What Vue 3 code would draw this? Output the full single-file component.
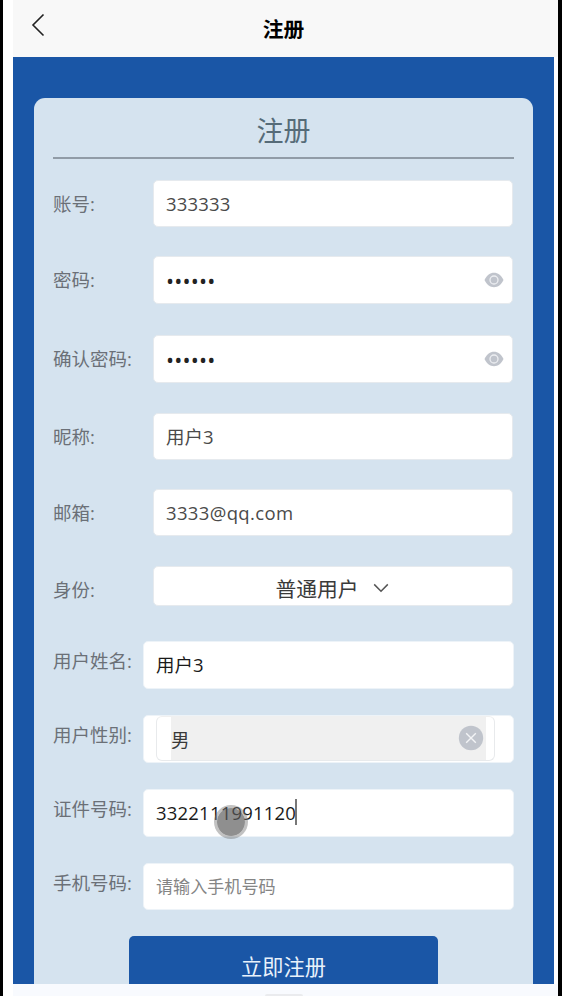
<script setup>
import { reactive } from 'vue';

const form = reactive({
    account: '333333',
    password: '333333',
    password2: '333333',
    nickname: '用户3',
    email: '3333@qq.com',
    role: '普通用户',
    realName: '用户3',
    gender: '男',
    idCard: '3322111991120',
    phone: ''
});

// 基础字段
const baseFields = [
    { key: 'account', label: '账号:', type: 'text' },
    { key: 'password', label: '密码:', type: 'password' },
    { key: 'password2', label: '确认密码:', type: 'password' },
    { key: 'nickname', label: '昵称:', type: 'text' },
    { key: 'email', label: '邮箱:', type: 'text' }
];
</script>

<template>
    <div class="phone">
        <header class="nav-bar">
            <svg class="back" width="14" height="24" viewBox="0 0 14 24">
                <path d="M12.5 1.5 L2 12 L12.5 22.5" />
            </svg>
            <h1>注册</h1>
        </header>

        <main class="page">
            <div class="card">
                <h2 class="card-title">注册</h2>

                <div v-for="item in baseFields" :key="item.key" class="row" :class="item.key">
                    <label>{{ item.label }}</label>
                    <div class="box">
                        <input v-model="form[item.key]" :type="item.type" spellcheck="false" />
                        <svg v-if="item.type === 'password'" class="eye" width="20" height="16" viewBox="0 0 20 16">
                            <path d="M0.5 8 C3 3 6 0.8 10 0.8 S17 3 19.5 8 C17 13 14 15.2 10 15.2 S3 13 0.5 8 Z" fill="#c0c4cc" />
                            <circle cx="10" cy="8" r="4" fill="#c0c4cc" stroke="#eceef1" stroke-width="1.3" />
                        </svg>
                    </div>
                </div>

                <div class="row role">
                    <label>身份:</label>
                    <div class="box select">
                        <span>{{ form.role }}</span>
                        <svg width="16" height="10" viewBox="0 0 16 10">
                            <path d="M1.2 1.4 L8 8.2 L14.8 1.4" />
                        </svg>
                    </div>
                </div>

                <div class="row detail real-name">
                    <label>用户姓名:</label>
                    <div class="box">
                        <input v-model="form.realName" type="text" spellcheck="false" />
                    </div>
                </div>

                <div class="row detail gender">
                    <label>用户性别:</label>
                    <div class="box">
                        <div class="picker">
                            <div class="picker-inner">
                                <span>{{ form.gender }}</span>
                                <svg width="26" height="26" viewBox="0 0 26 26">
                                    <circle cx="13" cy="13" r="12.2" fill="#c0c4cc" />
                                    <path d="M8.2 8.2 L17.8 17.8 M17.8 8.2 L8.2 17.8" stroke="#f3f4f6" stroke-width="1.4" />
                                </svg>
                            </div>
                        </div>
                    </div>
                </div>

                <div class="row detail id-card">
                    <label>证件号码:</label>
                    <div class="box">
                        <span class="typed">{{ form.idCard }}</span>
                        <i class="caret"></i>
                        <i class="touch"></i>
                    </div>
                </div>

                <div class="row detail mobile">
                    <label>手机号码:</label>
                    <div class="box">
                        <input v-model="form.phone" type="text" placeholder="请输入手机号码" />
                    </div>
                </div>

                <button class="submit">立即注册</button>
            </div>
        </main>

        <footer class="bottom"><i></i></footer>
    </div>
</template>

<style>
body {
    background: #000;
    overflow: hidden;
}
</style>

<style scoped>
.phone {
    box-sizing: border-box;
    width: 555px;
    height: 996px;
    margin-left: 3px;
    padding-left: 10px;
    background: #fff;
    overflow: hidden;
    font-family: "Open Sans", "Noto Sans CJK SC", sans-serif;
    font-size: 18.5px;
}

.nav-bar {
    position: relative;
    height: 57px;
    background: #f8f8f8;
}

.nav-bar h1 {
    margin: 0 4px 0 0;
    line-height: 58px;
    text-align: center;
    font-size: 20.8px;
    font-weight: 700;
    color: #000;
}

.back {
    position: absolute;
    left: 18px;
    top: 13px;
    fill: none;
    stroke: #222;
    stroke-width: 1.6;
}

.page {
    box-sizing: border-box;
    width: 541px;
    height: 927px;
    padding: 41px 21px 0;
    background: #1a56a6;
    overflow: hidden;
}

.card {
    box-sizing: border-box;
    height: 930px;
    padding: 0 19px;
    border-radius: 11px;
    background: #d5e3ef;
}

.card-title {
    height: 59px;
    margin: 0;
    border-bottom: 2px solid #919ca7;
    line-height: 65px;
    text-align: center;
    font-size: 27px;
    font-weight: 400;
    color: #566b78;
}

.row {
    display: flex;
    align-items: center;
    height: 47px;
    margin-top: 29px;
    padding-right: 1px;
}

.row label {
    width: 100px;
    flex-shrink: 0;
    line-height: 26px;
    color: #6b7077;
    white-space: nowrap;
}

.box {
    box-sizing: border-box;
    position: relative;
    display: flex;
    align-items: center;
    flex: 1;
    height: 100%;
    padding: 0 12px;
    border: 1px solid #e6eaee;
    border-radius: 5px;
    background: #fff;
}

.box input {
    flex: 1;
    min-width: 0;
    height: 100%;
    padding: 0;
    border: 0;
    outline: none;
    background: none;
    font: inherit;
    letter-spacing: 0.15px;
    color: #4a4a4a;
}

.box input[type="password"] {
    font-size: 21.5px;
    color: #222;
}

.box input::placeholder {
    font-size: 17.1px;
    letter-spacing: 0;
    color: #858585;
    opacity: 1;
}

.row.account {
    margin-top: 21px;
}

.row.password,
.row.password2 {
    height: 48px;
}

.row.password2 {
    margin-top: 31px;
}

.row.nickname,
.row.role {
    margin-top: 30px;
}

.row.nickname input {
    padding-bottom: 2px;
    box-sizing: border-box;
    letter-spacing: 0;
}

.row.email input {
    letter-spacing: 0.35px;
}

.box .eye {
    position: absolute;
    right: 8px;
    top: 15px;
}

.row.role {
    height: 40px;
}

.row.role label {
    padding-top: 7px;
}

.select {
    justify-content: center;
    gap: 14px;
    font-size: 20.8px;
    color: #3a3a3a;
}

.select span {
    line-height: 38px;
    padding-top: 5px;
}

.select svg {
    margin-top: 4px;
    margin-right: 2px;
    fill: none;
    stroke: #555;
    stroke-width: 1.5;
}

.row.detail {
    height: 48px;
    margin-top: 26px;
    padding-right: 0;
}

.row.detail label {
    width: 90px;
    padding-bottom: 8px;
}

.row.detail .box {
    border-color: #edf3f8;
}

.row.detail input {
    box-sizing: border-box;
    padding-bottom: 2px;
    letter-spacing: 0;
}

.row.detail input,
.typed {
    color: #1a1a1a;
}

.typed {
    padding-bottom: 2px;
    letter-spacing: 0.2px;
}

.row.real-name {
    margin-top: 35px;
}

.row.mobile {
    height: 47px;
}

.row.gender .box {
    align-items: flex-start;
    padding: 0 12px;
}

.picker {
    box-sizing: border-box;
    width: 339px;
    height: 45px;
    padding: 0 8px 0 14px;
    border: 1px solid #e8eaec;
    border-top-color: #f0f0f0;
    border-radius: 6px;
}

.picker-inner {
    display: flex;
    align-items: center;
    justify-content: space-between;
    height: 43px;
    padding-right: 2px;
    background: #f0f0f0;
    color: #3a3a3a;
}

.picker-inner svg {
    margin-bottom: 2px;
}

.caret {
    width: 2px;
    height: 26px;
    margin: 0 0 2px -1px;
    background: #777;
}

.touch {
    position: absolute;
    left: 70px;
    top: 15px;
    width: 28px;
    height: 28px;
    border: 3px solid rgba(120, 120, 120, 0.45);
    border-radius: 50%;
    background: rgba(90, 90, 90, 0.68);
    background-clip: padding-box;
}

.submit {
    display: block;
    width: 309px;
    height: 61px;
    margin: 26px 0 0 76px;
    padding: 0;
    border: 0;
    border-radius: 5px;
    background: #1a56a6;
    font: inherit;
    font-size: 21.2px;
    line-height: 60px;
    color: #e8f1fb;
}

.bottom {
    display: flex;
    justify-content: center;
    align-items: flex-end;
    height: 12px;
    background: #f8fafe;
}

.bottom i {
    width: 38px;
    height: 2px;
    margin-right: 4px;
    border-radius: 2px 2px 0 0;
    background: #eaebee;
}
</style>
